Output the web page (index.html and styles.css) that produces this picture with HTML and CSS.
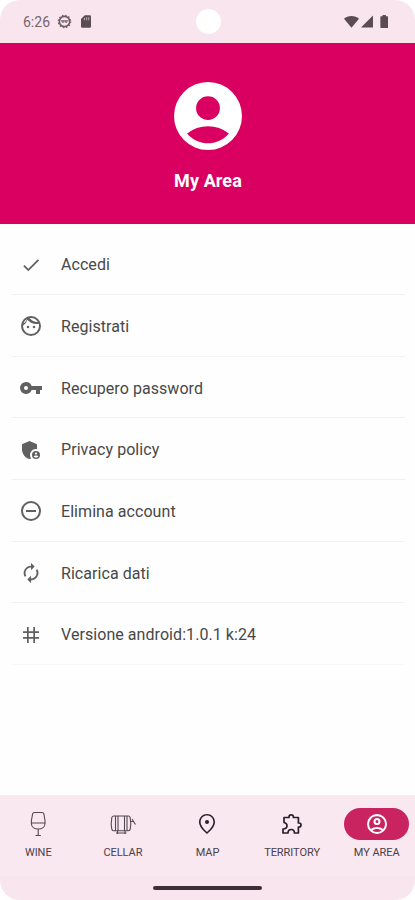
FILE: index.html
```html
<!DOCTYPE html>
<html lang="it">
<head>
<meta charset="utf-8">
<meta name="viewport" content="width=device-width, initial-scale=1">
<title>My Area</title>
<link rel="stylesheet" href="styles.css">
</head>
<body>
<div class="phone">
  <header class="status">
    <span class="clock">6:26</span>
    <svg class="debug" viewBox="0 0 16 16"><circle cx="8" cy="8" r="5.500" fill="none" stroke="#6b5c64" stroke-width="1.700"/><circle cx="8" cy="8" r="6.700" fill="none" stroke="#6b5c64" stroke-width="1.100" stroke-dasharray="1.700 1.800"/><path d="M4 7.200h8M5.500 7.500v1.300h1.700V7.500M8.800 7.500v1.300h1.700V7.500" fill="none" stroke="#6b5c64"/></svg>
    <svg class="sd" viewBox="0 0 16 20"><path d="M6 0h8a2 2 0 0 1 2 2v16a2 2 0 0 1-2 2H2a2 2 0 0 1-2-2V6z" fill="#5b4c54"/><path d="M5.500 4v4M9 3v5M12.500 3v5" stroke="#bfb0b8" stroke-width="1.600"/></svg>
    <span class="camera"></span>
    <svg class="wifi" viewBox="0 0 24 20"><path d="M12 20 0 5.500C3.200 2.500 7.300 1 12 1s8.800 1.500 12 4.500z" fill="#5b4c54"/></svg>
    <svg class="signal" viewBox="0 0 20 20"><path d="M0 20 20 0v20z" fill="#5b4c54"/></svg>
    <svg class="battery" viewBox="0 0 12 20"><path d="M3.500 0h5v2H11a1 1 0 0 1 1 1v16a1 1 0 0 1-1 1H1a1 1 0 0 1-1-1V3a1 1 0 0 1 1-1h2.500z" fill="#5b4c54"/></svg>
  </header>

  <section class="hero">
    <svg class="avatar" viewBox="2 2 20 20"><path fill="#fff" fill-rule="evenodd" d="M12 2a10 10 0 1 0 0 20 10 10 0 0 0 0-20zm0 4.200a3.500 3.500 0 1 1 0 7 3.500 3.500 0 0 1 0-7zm0 13.800c-2.030 0-4.430-.820-6.140-2.880a9.950 9.950 0 0 1 12.280 0C16.430 19.180 14.030 20 12 20z"/></svg>
    <h1>My Area</h1>
  </section>

  <ul class="menu">
    <li><svg class="icon" viewBox="0 0 24 24"><path d="M9 16.170 4.830 12l-1.420 1.410L9 19 21 7l-1.410-1.410z" transform="translate(1.200 1.200) scale(.9)"/></svg><span>Accedi</span></li>
    <li><svg class="icon" viewBox="0 0 24 24"><path d="M10.250 13a1.250 1.250 0 1 1-2.500 0 1.250 1.250 0 0 1 2.500 0zM15 11.750a1.250 1.250 0 1 0 0 2.500 1.250 1.250 0 0 0 0-2.500zM22 12a10 10 0 1 1-20 0 10 10 0 0 1 20 0zM10.660 4.120A9.990 9.990 0 0 0 17.500 8c.460 0 .910-.050 1.340-.120A7.990 7.990 0 0 0 12 4c-.460 0-.910.050-1.340.120zM4.420 9.470a8.050 8.050 0 0 0 3.660-4.440 8.040 8.040 0 0 0-3.660 4.440zM20 12c0-.780-.120-1.530-.330-2.240-.700.150-1.420.240-2.170.240a11.960 11.960 0 0 1-9.150-4.260A10.020 10.020 0 0 1 4 11.860V12a8 8 0 0 0 16 0z"/></svg><span>Registrati</span></li>
    <li><svg class="icon" viewBox="0 0 24 24"><path d="M12.650 10A5.990 5.990 0 0 0 7 6a6 6 0 1 0 5.650 8H17v4h4v-4h2v-4H12.650zM7 14a2 2 0 1 1 0-4 2 2 0 0 1 0 4z"/></svg><span>Recupero password</span></li>
    <li><svg class="icon" viewBox="0 0 24 24"><path d="M17 11c.340 0 .670.040 1 .090V6.270L10.500 3 3 6.270v4.910c0 4.540 3.200 8.790 7.500 9.820.550-.130 1.080-.320 1.600-.550A5.973 5.973 0 0 1 11 17c0-3.310 2.690-6 6-6z"/><path fill-rule="evenodd" d="M17 13a4 4 0 1 0 0 8 4 4 0 0 0 0-8zm0 1.380a1.120 1.120 0 1 1 0 2.240 1.120 1.120 0 0 1 0-2.240zm0 5.370c-.930 0-1.740-.460-2.240-1.170.050-.720 1.510-1.080 2.240-1.080s2.190.360 2.240 1.080c-.500.710-1.310 1.170-2.240 1.170z"/></svg><span>Privacy policy</span></li>
    <li><svg class="icon" viewBox="0 0 24 24"><path fill-rule="evenodd" d="M7 11v2h10v-2zM12 2a10 10 0 1 0 0 20 10 10 0 0 0 0-20zm0 18a8 8 0 1 1 0-16 8 8 0 0 1 0 16z"/></svg><span>Elimina account</span></li>
    <li><svg class="icon" viewBox="0 0 24 24"><path transform="translate(1 1) scale(.920)" d="M12 6v3l4-4-4-4v3a8 8 0 0 0-6.760 12.260L6.700 14.800A5.870 5.870 0 0 1 6 12c0-3.310 2.690-6 6-6zm6.760 1.740L17.300 9.200c.440.840.700 1.790.700 2.800 0 3.310-2.690 6-6 6v-3l-4 4 4 4v-3a8 8 0 0 0 6.760-12.260z"/></svg><span>Ricarica dati</span></li>
    <li><svg class="icon" viewBox="0 0 24 24"><path fill-rule="evenodd" d="M20 10V8.300h-4V4h-1.700v4.300H9.700V4H8v4.300H4V10h4v4H4v1.700h4V20h1.700v-4.300h4.600V20H16v-4.300h4V14h-4v-4zm-5.700 4H9.700v-4h4.600z"/></svg><span>Versione android:1.0.1 k:24</span></li>
  </ul>

  <nav class="tabs">
    <a class="tab"><span class="pill"><svg viewBox="0 0 24 24" class="line thin"><path d="M8.500 .5h7.500q1.500 0 1.900 1.500L19 8.500v3c0 3.500-3 5.500-6.800 5.500s-6.800-2-6.800-5.500v-3L6.600 2Q7 .5 8.500 .5zM5.400 11h13.600M12.200 17v6.500M9.500 23.500h5.400"/></svg></span><span class="label">WINE</span></a>
    <a class="tab"><span class="pill"><svg viewBox="0 0 24 24" class="line thin"><path d="M2.500 4H17.500a2 2 0 0 1 1.700 1.600q1.200 6.400 0 11.600a2 2 0 0 1-1.700 1.600H2.500A2 2 0 0 1 .8 17.200q-1.200-5.200 0-11.600A2 2 0 0 1 2.500 4zM4.500 4v14.800M7 4v14.800M13.500 4v14.800M16 4v14.800M6.500 18.800v3.200M14 18.800v3.200M5 21h10.500M19.500 9.500h2.500M21 7l3.500 5.500"/></svg></span><span class="label">CELLAR</span></a>
    <a class="tab"><span class="pill"><svg viewBox="0 0 24 24"><path fill-rule="evenodd" d="M12 2c-4.200 0-8 3.220-8 8.200 0 3.320 2.670 7.250 8 11.800 5.330-4.550 8-8.480 8-11.800C20 5.220 16.200 2 12 2zm0 18c-4.400-4-6.400-7.300-6.400-9.810C5.600 6.300 8.500 3.600 12 3.600s6.400 2.700 6.400 6.600c0 2.500-2 5.800-6.400 9.800z"/><circle cx="12" cy="10" r="2"/></svg></span><span class="label">MAP</span></a>
    <a class="tab"><span class="pill"><svg viewBox="0 0 24 24" class="line puzzle"><path d="M4 5.500h5V5a2.200 2.200 0 0 1 4.400 0v.5h5V11h.6a2 2 0 0 1 0 4h-.6v6h-4c0-2-1-3.500-3.100-3.500S8 19 8 21H3v-4c2.500 0 4-1 4-3.200S5.500 10.800 4 10.500z"/></svg></span><span class="label">TERRITORY</span></a>
    <a class="tab active"><span class="pill"><svg viewBox="0 0 24 24"><path fill-rule="evenodd" d="M12 2a10 10 0 1 0 0 20 10 10 0 0 0 0-20zM7.350 18.500C8.660 17.560 10.260 17 12 17s3.340.560 4.650 1.500A7.930 7.930 0 0 1 12 20a7.930 7.930 0 0 1-4.650-1.500zm10.790-1.380a9.950 9.950 0 0 0-12.280 0A7.960 7.960 0 1 1 20 12c0 1.950-.700 3.730-1.860 5.120z"/><path fill-rule="evenodd" d="M12 6a3.500 3.500 0 1 0 0 7 3.500 3.500 0 0 0 0-7zm0 5a1.500 1.500 0 1 1 0-3 1.500 1.500 0 0 1 0 3z"/></svg></span><span class="label">MY AREA</span></a>
  </nav>
  <footer class="gesture"><span class="handle"></span></footer>
</div>
</body>
</html>
```
FILE: styles.css
```css
* { box-sizing: border-box; }
body { margin: 0; background: #fff; font-family: Roboto, "Liberation Sans", sans-serif; }
.phone { width: 415px; height: 900px; border-radius: 20px; overflow: hidden; background: #fefefe; display: flex; flex-direction: column; }
svg { display: block; flex: none; }

.status { position: relative; height: 42.500px; flex: none; background: #f9e5ee; display: flex; align-items: center; padding: 1px 27px 0 23px; }
.clock { font-size: 14px; letter-spacing: 0; color: #75666e; width: 33.500px; }
.debug { width: 15px; height: 15px; }
.sd { width: 10px; height: 13px; margin-left: 9px; }
.camera { position: absolute; left: 196px; top: 9px; width: 25px; height: 25px; border-radius: 50%; background: #fff; }
.wifi { width: 15px; height: 13px; margin-left: auto; }
.signal { width: 12px; height: 13px; margin-left: 2px; }
.battery { width: 8.500px; height: 13px; margin-left: 7px; }

.hero { height: 181.500px; flex: none; background: #d90062; display: flex; flex-direction: column; align-items: center; padding-top: 39px; }
.avatar { width: 68px; height: 68px; margin-left: 1px; }
.hero h1 { margin: 20px 0 0 1px; font-size: 18px; line-height: 22px; font-weight: 700; color: #fff; letter-spacing: .1px; }

.menu { list-style: none; margin: 0; padding: 9.500px 10px 0 12px; flex: 1; }
.menu li { height: 61.660px; border-bottom: 1px solid #f1f1f1; display: flex; align-items: center; padding: 2px 0 0 7px; gap: 18px; font-size: 16px; letter-spacing: .06px; color: #484848; }
.menu li:last-child { border-color: #f8f8f8; }
.icon { width: 24px; height: 24px; fill: #606060; }

.tabs { height: 81px; flex: none; background: #f9e8f0; display: grid; grid-template-columns: repeat(5, 1fr); column-gap: 8px; padding-top: 12.500px; }
.tab { display: flex; flex-direction: column; align-items: center; color: #29202a; }
.pill { width: 64.500px; height: 32px; border-radius: 16px; display: flex; align-items: center; justify-content: center; }
.pill svg { width: 24px; height: 24px; fill: currentColor; overflow: visible; }
.pill .line { fill: none; stroke: currentColor; stroke-linejoin: round; }
.pill .thin { stroke-width: 1.100; color: #55474f; }
.pill .puzzle { stroke-width: 1.700; }
.active .pill { background: #c9245f; color: #fff; }
.label { margin-top: 6.500px; font-size: 11px; line-height: 14px; letter-spacing: -.05px; white-space: nowrap; color: #4b4048; }
.gesture { height: 24px; flex: none; background: #f9e5ee; display: flex; justify-content: center; padding-top: 10px; }
.handle { width: 109px; height: 4px; border-radius: 2px; background: #3d2f38; }
```
